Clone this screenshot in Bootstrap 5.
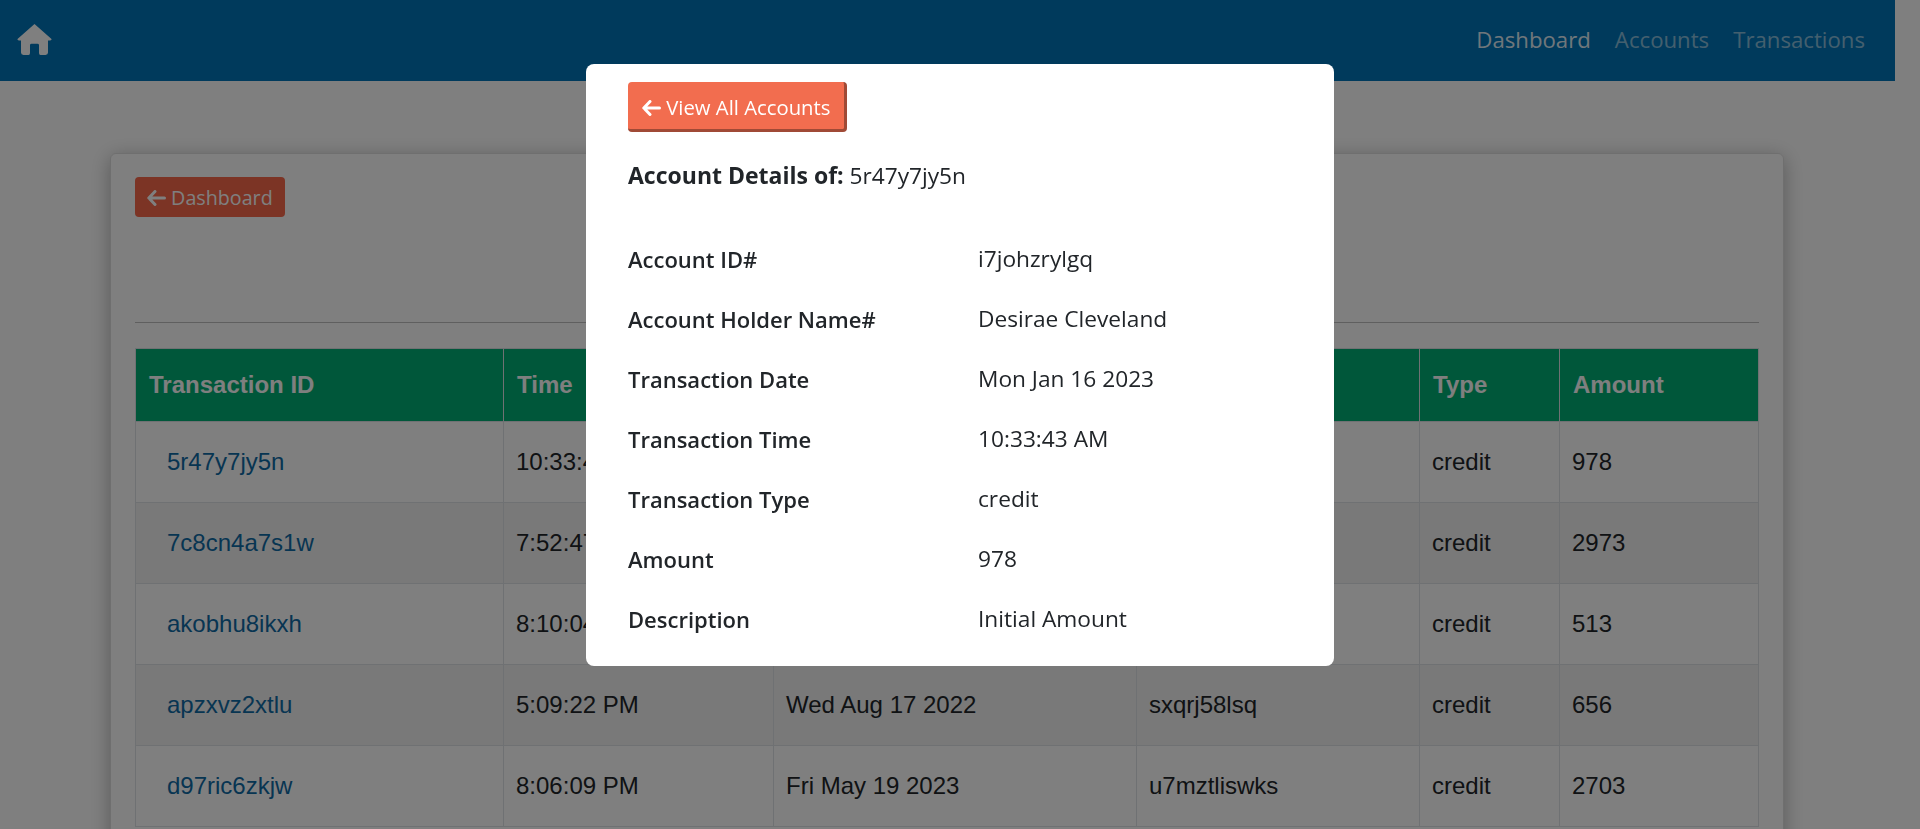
<!DOCTYPE html>
<html lang="en">
<head>
    <meta charset="UTF-8">
    <meta name="viewport" content="width=device-width, initial-scale=1.0">
    <title>Transactions</title>
    <link href="https://cdn.jsdelivr.net/npm/bootstrap@5.3.0/dist/css/bootstrap.min.css" rel="stylesheet">
    <style>
        body {
            font-family: "Open Sans", "Noto Sans", sans-serif;
            background-color: #fff;
            padding-right: 25px;
            overflow: hidden;
            height: 829px;
        }
        .top-bar {
            background-color: #0075b8;
            height: 81px;
            padding: 0 18px 2px 17px;
        }
        .top-bar .nav-link {
            font-size: 22.2px;
            line-height: 30px;
            padding: 0 12px;
            color: rgba(255, 255, 255, .55);
        }
        .top-bar .nav-link.active { color: rgba(255, 255, 255, .9); }
        .panel {
            margin: 72px 111px 0 110px;
            padding: 23px 24px;
            border: 1px solid rgba(0, 0, 0, .125);
            border-radius: 6px;
            box-shadow: 0 4px 20px rgba(0, 0, 0, .3);
            min-height: 800px;
        }
        .btn-back {
            background-color: #f8684a;
            color: #fff;
            font-size: 19.7px;
            line-height: 28px;
            padding: 7px 12px 5px;
            border: 0;
            border-radius: 4px;
        }
        .panel hr {
            margin: 105px 0 25px;
            border-color: #000;
            opacity: .25;
        }
        .tx-table {
            font-family: "Liberation Sans", Arial, sans-serif;
            font-size: 24px;
            margin: 0;
            table-layout: fixed;
            width: 1623px;
        }
        .tx-table > thead > tr > th {
            background-color: #00ae74;
            color: #fff;
            height: 73px;
            padding: 0 13px;
            vertical-align: middle;
            border-color: #dee2e6;
        }
        .tx-table > tbody > tr > td {
            height: 81px;
            padding: 0 12px;
            vertical-align: middle;
            color: #212529;
        }
        .tx-table > tbody > tr:nth-child(even) > td { background-color: #f2f2f2; }
        .tx-table a {
            display: inline-block;
            padding-left: 19px;
            color: #0f6aa5;
            text-decoration: none;
        }
        .detail-dialog {
            max-width: 748px;
            margin: 64px auto 0;
        }
        .detail-dialog .modal-content {
            height: 602px;
            padding: 18px 42px;
            font-size: 22.7px;
            color: #212529;
            border: 0;
        }
        .btn-accounts {
            background-color: #f26d4f;
            color: #fff;
            font-size: 20.3px;
            line-height: 28px;
            padding: 11px 14px 8px 14px;
            border: 0;
            border-right: 3px solid #a04a36;
            border-bottom: 3px solid #a04a36;
            border-radius: 4px;
        }
        .arrow-icon { vertical-align: -1px; }
        .detail-head {
            margin: 28px 0 38px;
            line-height: 30px;
            flex: 0 0 30px;
        }
        .detail-head b { font-size: 23px; }
        .detail-row {
            flex: 0 0 60px;
            align-items: center;
        }
        .detail-row .detail-label { width: 350px; font-size: 22px; font-weight: 600; }
    </style>
</head>
<body>
    <nav class="top-bar d-flex align-items-center justify-content-between">
        <a href="#" class="d-block">
            <svg width="35" height="31" viewBox="0 0 35 32" preserveAspectRatio="none" class="d-block"><path fill="#fff" d="M17.5 0 L34.5 15.5 Q35 17 33 17 L31 17 L31 29.5 Q31 32 28.5 32 L23.5 32 Q22 32 22 30 L22 22 Q22 20.5 20.5 20.5 L14.5 20.5 Q13 20.5 13 22 L13 30 Q13 32 11.5 32 L6.5 32 Q4 32 4 29.5 L4 17 L2 17 Q0 17 .5 15.5 Z"/></svg>
        </a>
        <ul class="nav">
            <li class="nav-item"><a class="nav-link active" href="#">Dashboard</a></li>
            <li class="nav-item"><a class="nav-link" href="#">Accounts</a></li>
            <li class="nav-item"><a class="nav-link" href="#">Transactions</a></li>
        </ul>
    </nav>

    <div class="panel">
        <a href="#" class="btn btn-back">
            <svg class="arrow-icon" width="19" height="16" viewBox="0 0 19 16"><path fill="none" stroke="currentColor" stroke-width="3" stroke-linecap="round" stroke-linejoin="round" d="M8 1.5 L1.8 8 L8 14.5 M2 8 H17.5"/></svg>
            Dashboard
        </a>
        <hr>
        <table class="table table-bordered tx-table">
            <colgroup>
                <col style="width: 368px"><col style="width: 270px"><col style="width: 363px"><col style="width: 283px"><col style="width: 140px"><col style="width: 199px">
            </colgroup>
            <thead>
                <tr><th>Transaction ID</th><th>Time</th><th>Date</th><th>Account ID</th><th>Type</th><th>Amount</th></tr>
            </thead>
            <tbody>
                <tr><td><a href="#">5r47y7jy5n</a></td><td>10:33:43 AM</td><td>Mon Jan 16 2023</td><td>i7johzrylgq</td><td>credit</td><td>978</td></tr>
                <tr><td><a href="#">7c8cn4a7s1w</a></td><td>7:52:47 PM</td><td>Tue Feb 14 2023</td><td>i7johzrylgq</td><td>credit</td><td>2973</td></tr>
                <tr><td><a href="#">akobhu8ikxh</a></td><td>8:10:04 PM</td><td>Thu Mar 9 2023</td><td>sxqrj58lsq</td><td>credit</td><td>513</td></tr>
                <tr><td><a href="#">apzxvz2xtlu</a></td><td>5:09:22 PM</td><td>Wed Aug 17 2022</td><td>sxqrj58lsq</td><td>credit</td><td>656</td></tr>
                <tr><td><a href="#">d97ric6zkjw</a></td><td>8:06:09 PM</td><td>Fri May 19 2023</td><td>u7mztliswks</td><td>credit</td><td>2703</td></tr>
            </tbody>
        </table>
    </div>

    <div class="modal-backdrop fade show"></div>
    <div class="modal fade show d-block" tabindex="-1">
        <div class="modal-dialog detail-dialog">
            <div class="modal-content">
                <div><a href="#" class="btn btn-accounts">
                    <svg class="arrow-icon" width="19" height="16" viewBox="0 0 19 16"><path fill="none" stroke="currentColor" stroke-width="3" stroke-linecap="round" stroke-linejoin="round" d="M8 1.5 L1.8 8 L8 14.5 M2 8 H17.5"/></svg>
                    View All Accounts
                </a></div>
                <div class="detail-head"><b>Account Details of:</b> 5r47y7jy5n</div>
                <div class="d-flex detail-row"><div class="detail-label">Account ID#</div><div>i7johzrylgq</div></div>
                <div class="d-flex detail-row"><div class="detail-label">Account Holder Name#</div><div>Desirae Cleveland</div></div>
                <div class="d-flex detail-row"><div class="detail-label">Transaction Date</div><div>Mon Jan 16 2023</div></div>
                <div class="d-flex detail-row"><div class="detail-label">Transaction Time</div><div>10:33:43 AM</div></div>
                <div class="d-flex detail-row"><div class="detail-label">Transaction Type</div><div>credit</div></div>
                <div class="d-flex detail-row"><div class="detail-label">Amount</div><div>978</div></div>
                <div class="d-flex detail-row"><div class="detail-label">Description</div><div>Initial Amount</div></div>
            </div>
        </div>
    </div>

    <script src="https://cdn.jsdelivr.net/npm/bootstrap@5.3.0/dist/js/bootstrap.bundle.min.js"></script>
</body>
</html>
